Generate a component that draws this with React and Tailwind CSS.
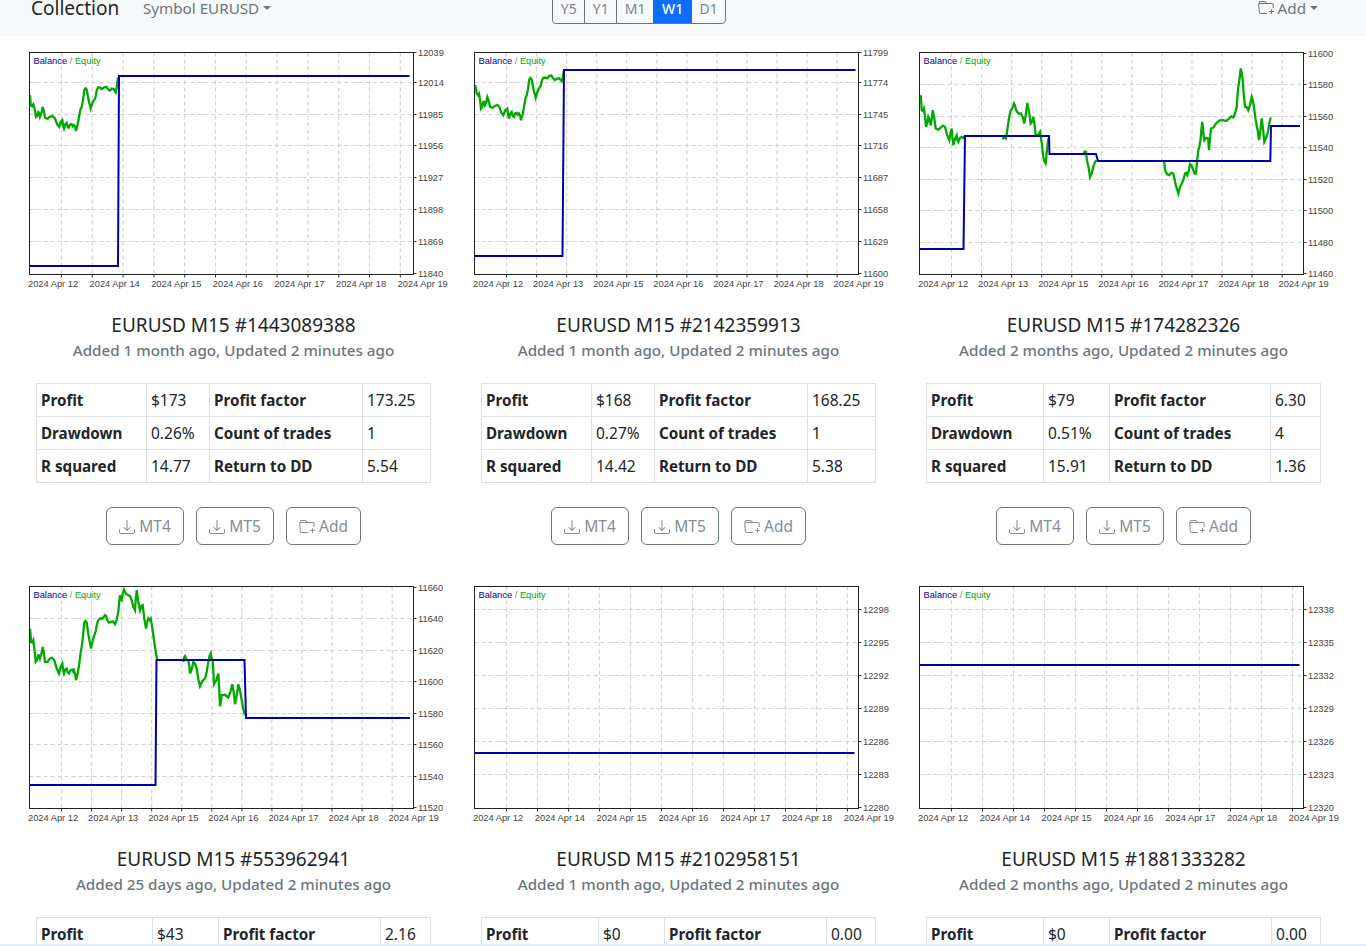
import { BsDownload, BsFolderPlus } from "react-icons/bs";

// zoomed-crop coordinates -> chart coordinates, with a little noise between points
function line(list, ox, oy) {
  const out = [];
  list.forEach(([x, y], i) => {
    const px = x / 3 + ox;
    const py = y / 3 + oy;
    out.push(`${px.toFixed(1)},${py.toFixed(1)}`);
    if (i < list.length - 1) {
      const nx = list[i + 1][0] / 3 + ox;
      const ny = list[i + 1][1] / 3 + oy;
      const d = i % 2 ? 1.6 : -1.6;
      out.push(`${((px + nx) / 2).toFixed(1)},${((py + ny) / 2 + d).toFixed(1)}`);
    }
  });
  return out.join(" ");
}

const xs = (step) => Array.from({ length: 12 }, (_, i) => 32 + i * step);
const ds = (step) => Array.from({ length: 7 }, (_, i) => -1.5 + i * step);

const charts = [
  {
    step: 30.8,
    dateStep: 61.6,
    dates: ["12", "14", "15", "16", "17", "18", "19"],
    hs: [30, 62, 93, 125, 157, 189],
    labels: [[0, 12039], [30, 12014], [62, 11985], [93, 11956], [125, 11927], [157, 11898], [189, 11869], [221, 11840]],
    blue: "0,214 88.5,214 89.5,24 380,24",
    green: [
      line(
        [[90, 285], [92, 315], [100, 312], [108, 350], [115, 335], [120, 350], [128, 320], [135, 352], [150, 350], [165, 355], [178, 380], [187, 360], [192, 385], [200, 368], [206, 382], [215, 372], [222, 375], [228, 392], [238, 345], [245, 320], [253, 270], [260, 268], [272, 325], [285, 295], [290, 270], [300, 262], [312, 262], [325, 268], [335, 265], [347, 277], [354, 232]],
        -29.5,
        -52.3
      ),
    ],
  },
  {
    step: 30.06,
    dateStep: 60.1,
    dates: ["12", "13", "15", "16", "17", "18", "19"],
    hs: [30, 62, 93, 125, 157, 189],
    labels: [[0, 11799], [30, 11774], [62, 11745], [93, 11716], [125, 11687], [157, 11658], [189, 11629], [221, 11600]],
    blue: "0,204 88,204 89.5,18 381,18",
    green: [
      line(
        [[30, 120], [35, 145], [42, 145], [48, 190], [55, 170], [60, 180], [67, 155], [75, 185], [90, 182], [103, 185], [115, 210], [127, 190], [132, 220], [140, 200], [147, 215], [155, 203], [162, 205], [168, 225], [178, 180], [185, 150], [193, 103], [200, 103], [212, 158], [225, 125], [230, 108], [240, 97], [253, 92], [265, 100], [275, 100], [290, 108], [297, 75]],
        -9.5,
        -7.3
      ),
    ],
  },
  {
    step: 30.06,
    dateStep: 60.1,
    dates: ["12", "13", "15", "16", "17", "18", "19"],
    hs: [32, 64, 95, 127, 158, 190],
    labels: [[1, 11600], [32, 11580], [64, 11560], [95, 11540], [127, 11520], [158, 11500], [190, 11480], [221, 11460]],
    blue: "0,197 44,197 45.5,84 129.5,84 130,102 176.5,102 178.5,109 350.8,109 351.5,74 380.5,74",
    green: [
      line(
        [[17, 105], [20, 150], [27, 145], [33, 200], [40, 170], [47, 195], [53, 150], [62, 205], [78, 202], [90, 200], [103, 240], [110, 205], [115, 255], [125, 225], [130, 245], [140, 230], [150, 228]],
        -4.5,
        7.7
      ),
      line(
        [[262, 237], [272, 235], [278, 200], [287, 150], [297, 130], [303, 150], [318, 160], [328, 190], [337, 128], [347, 190], [355, 170], [362, 225], [375, 215], [385, 290], [392, 310], [400, 235]],
        -4.5,
        7.7
      ),
      line([[505, 282], [513, 275], [518, 310], [525, 350], [535, 320], [545, 300]], -4.5, 7.7),
      line(
        [[162, 305], [165, 330], [178, 345], [190, 340], [205, 400], [215, 370], [225, 340], [232, 345], [240, 312], [250, 330], [258, 340], [265, 270], [272, 235], [277, 185], [283, 240], [295, 235], [297, 270], [303, 205], [318, 190], [340, 180], [358, 175], [370, 172], [380, 140], [385, 80], [392, 25], [398, 60], [405, 140], [415, 150], [425, 110], [432, 140], [440, 195], [447, 240], [455, 175], [463, 245], [475, 210], [482, 172]],
        190.5,
        7.7
      ),
    ],
  },
  {
    step: 30.06,
    dateStep: 60.1,
    dates: ["12", "13", "15", "16", "17", "18", "19"],
    hs: [32, 64, 95, 127, 158, 190],
    labels: [[1, 11660], [32, 11640], [64, 11620], [95, 11600], [127, 11580], [158, 11560], [190, 11540], [221, 11520]],
    blue: "0,199 126,199 127,74 215,74 216.5,132 380.5,132",
    green: [
      line(
        [[30, 145], [33, 185], [40, 180], [47, 245], [55, 225], [60, 235], [68, 200], [75, 245], [90, 235], [103, 240], [117, 280], [127, 250], [132, 280], [140, 265], [147, 280], [158, 268], [162, 270], [168, 300], [178, 250], [185, 200], [193, 127], [200, 127], [213, 205], [225, 160], [230, 135], [240, 115], [255, 105], [262, 120], [272, 125], [285, 132], [295, 95], [300, 45], [305, 60], [312, 28], [325, 45], [335, 60], [345, 90], [350, 30], [360, 90], [368, 75], [378, 145], [385, 115], [392, 115], [402, 180], [412, 240]],
        -9.5,
        -6.3
      ),
      line(
        [[490, 245], [495, 228], [505, 240], [510, 280], [520, 245], [530, 265], [540, 318], [555, 295], [565, 245], [572, 220], [578, 240], [582, 312], [595, 280], [600, 378], [605, 345], [625, 352], [637, 312], [645, 372], [655, 312], [665, 360], [675, 405]],
        -9.5,
        -6.3
      ),
    ],
  },
  {
    step: 31,
    dateStep: 61.8,
    dates: ["12", "14", "15", "16", "17", "18", "19"],
    hs: [23, 56, 89, 122, 155, 188],
    labels: [[23, 12298], [56, 12295], [89, 12292], [122, 12289], [155, 12286], [188, 12283], [221, 12280]],
    blue: "0,167 380,167",
    green: [],
  },
  {
    step: 31,
    dateStep: 61.8,
    dates: ["12", "14", "15", "16", "17", "18", "19"],
    hs: [23, 56, 89, 122, 155, 188],
    labels: [[23, 12338], [56, 12335], [89, 12332], [122, 12329], [155, 12326], [188, 12323], [221, 12320]],
    blue: "0,79 380,79",
    green: [],
  },
];

const cards = [
  {
    id: "1443089388",
    sub: "Added 1 month ago, Updated 2 minutes ago",
    cols: [110, 63, 153, 68],
    rows: [
      ["Profit", "$173", "Profit factor", "173.25"],
      ["Drawdown", "0.26%", "Count of trades", "1"],
      ["R squared", "14.77", "Return to DD", "5.54"],
    ],
  },
  {
    id: "2142359913",
    sub: "Added 1 month ago, Updated 2 minutes ago",
    cols: [110, 63, 153, 68],
    rows: [
      ["Profit", "$168", "Profit factor", "168.25"],
      ["Drawdown", "0.27%", "Count of trades", "1"],
      ["R squared", "14.42", "Return to DD", "5.38"],
    ],
  },
  {
    id: "174282326",
    sub: "Added 2 months ago, Updated 2 minutes ago",
    cols: [117, 66, 161, 50],
    rows: [
      ["Profit", "$79", "Profit factor", "6.30"],
      ["Drawdown", "0.51%", "Count of trades", "4"],
      ["R squared", "15.91", "Return to DD", "1.36"],
    ],
  },
  {
    id: "553962941",
    sub: "Added 25 days ago, Updated 2 minutes ago",
    cols: [116, 66, 162, 50],
    rows: [["Profit", "$43", "Profit factor", "2.16"]],
  },
  {
    id: "2102958151",
    sub: "Added 1 month ago, Updated 2 minutes ago",
    cols: [117, 66, 162, 49],
    rows: [["Profit", "$0", "Profit factor", "0.00"]],
  },
  {
    id: "1881333282",
    sub: "Added 2 months ago, Updated 2 minutes ago",
    cols: [117, 66, 162, 49],
    rows: [["Profit", "$0", "Profit factor", "0.00"]],
  },
];

function Chart({ chart }) {
  return (
    <svg width="445" height="248" className="block font-['Liberation_Sans',sans-serif] text-[9.3px]">
      <g transform="translate(18.5 5.5)">
        {xs(chart.step).map((x) => (
          <g key={x}>
            <line x1={x} x2={x} y1="0" y2="222" stroke="#d2d2d2" strokeWidth="1.2" strokeDasharray="4 3" />
            <line x1={x} x2={x} y1="222" y2="225" stroke="#333" />
          </g>
        ))}
        {chart.hs.map((y) => (
          <line key={y} x1="0" x2="384" y1={y} y2={y} stroke="#d2d2d2" strokeWidth="1.2" strokeDasharray="4 3" />
        ))}
        {chart.green.map((p, i) => (
          <polyline key={i} points={p} fill="none" stroke="#00aa00" strokeWidth="2.3" />
        ))}
        <polyline points={chart.blue} transform="translate(0 -0.5)" fill="none" stroke="#0000aa" strokeWidth="2" />
        <rect x="0" y="0" width="384" height="222" fill="none" stroke="#222" />
        <text x="4" y="11" fill="#0000aa">
          Balance <tspan fill="#888">/</tspan> <tspan fill="#00aa00">Equity</tspan>
        </text>
        {chart.labels.map(([y, v]) => (
          <g key={v}>
            <line x1="384" x2="387" y1={y} y2={y} stroke="#333" />
            <text x="388.5" y={y + 3.2} fill="#444">
              {v}
            </text>
          </g>
        ))}
        {ds(chart.dateStep).map((x, i) => (
          <text key={x} x={x} y="234" fill="#444">
            2024 Apr {chart.dates[i]}
          </text>
        ))}
      </g>
    </svg>
  );
}

function Outline({ icon, label, width }) {
  return (
    <button className={`flex h-[38px] items-center justify-center gap-1 rounded-md border border-[#6c757d] pt-px text-[15.5px] text-[#868e96] ${width}`}>
      {icon}
      {label}
    </button>
  );
}

function Card({ card, chart }) {
  return (
    <div className="flex h-[534px] flex-col items-center">
      <div className="mt-[11px]">
        <Chart chart={chart} />
      </div>
      <h5 className="mt-[15px] text-[19px] leading-[30px] text-[#212529]">EURUSD M15 #{card.id}</h5>
      <p className="mt-[-2px] text-[15.2px] leading-6 font-medium text-[#6c757d]">{card.sub}</p>
      <table className="mt-[21px] w-[394px] table-fixed border-collapse text-[#212529]">
        <colgroup>
          {card.cols.map((w, i) => (
            <col key={i} style={{ width: w }} />
          ))}
        </colgroup>
        <tbody>
          {card.rows.map((r) => (
            <tr key={r[0]} className="h-[33px]">
              <th className="border border-[#dee2e6] px-1 pt-px text-left text-[15.2px] font-bold">{r[0]}</th>
              <td className="border border-[#dee2e6] px-1 pt-px text-[15.5px]">{r[1]}</td>
              <th className="border border-[#dee2e6] px-1 pt-px text-left text-[15.2px] font-bold">{r[2]}</th>
              <td className="border border-[#dee2e6] px-1 pt-px text-[15.5px]">{r[3]}</td>
            </tr>
          ))}
        </tbody>
      </table>
      <div className="mt-6 flex gap-3">
        <Outline icon={<BsDownload size={16} />} label="MT4" width="w-[78px]" />
        <Outline icon={<BsDownload size={16} />} label="MT5" width="w-[78px]" />
        <Outline icon={<BsFolderPlus size={16} />} label="Add" width="w-[75px]" />
      </div>
    </div>
  );
}

function Caret() {
  return <span className="ml-1 inline-block border-x-4 border-t-4 border-x-transparent border-t-[#6c757d]" />;
}

const periods = ["Y5", "Y1", "M1", "W1", "D1"];

export default function App() {
  return (
    <div className="flex h-[946px] w-[1366px] flex-col overflow-hidden bg-white font-['Noto_Sans',sans-serif]">
      {/* Navbar, scrolled partly out of view */}
      <div className="h-9 shrink-0 bg-[#f8f9fa]">
        <div className="mt-[-7px] flex h-[31px] items-center pr-[48px] pl-[31px]">
          <span className="w-[112px] text-[19px] text-[#212529]">Collection</span>
          <span className="flex items-center text-[15.2px] text-[#6c757d]">
            Symbol EURUSD
            <Caret />
          </span>
          <div className="ml-[281px] flex h-[31px] overflow-hidden rounded-[4px] border border-[#6c757d] text-sm text-[#7d858c]">
            {periods.map((p, i) => (
              <span
                key={p}
                className={
                  p === "W1"
                    ? "flex w-[39px] items-center justify-center bg-[#0d6efd] font-medium text-white"
                    : i === 2
                    ? "flex w-[37px] items-center justify-center border-l border-[#6c757d]"
                    : i === 0
                    ? "flex w-[31px] items-center justify-center"
                    : i === 4
                    ? "flex w-[33px] items-center justify-center"
                    : "flex w-[32px] items-center justify-center border-l border-[#6c757d]"
                }
              >
                {p}
              </span>
            ))}
          </div>
          <span className="ml-auto flex items-center text-[15.2px] text-[#6c757d]">
            <BsFolderPlus size={16} className="mr-1" />
            Add
            <Caret />
          </span>
        </div>
      </div>

      {/* Cards */}
      <div className="min-h-0 flex-1 overflow-hidden pl-[11px]">
        <div className="grid w-[1335px] grid-cols-3">
          {cards.map((c, i) => (
            <Card key={c.id} card={c} chart={charts[i]} />
          ))}
        </div>
      </div>
      <div className="h-[2px] shrink-0 bg-[#e4eefa]" />
    </div>
  );
}
